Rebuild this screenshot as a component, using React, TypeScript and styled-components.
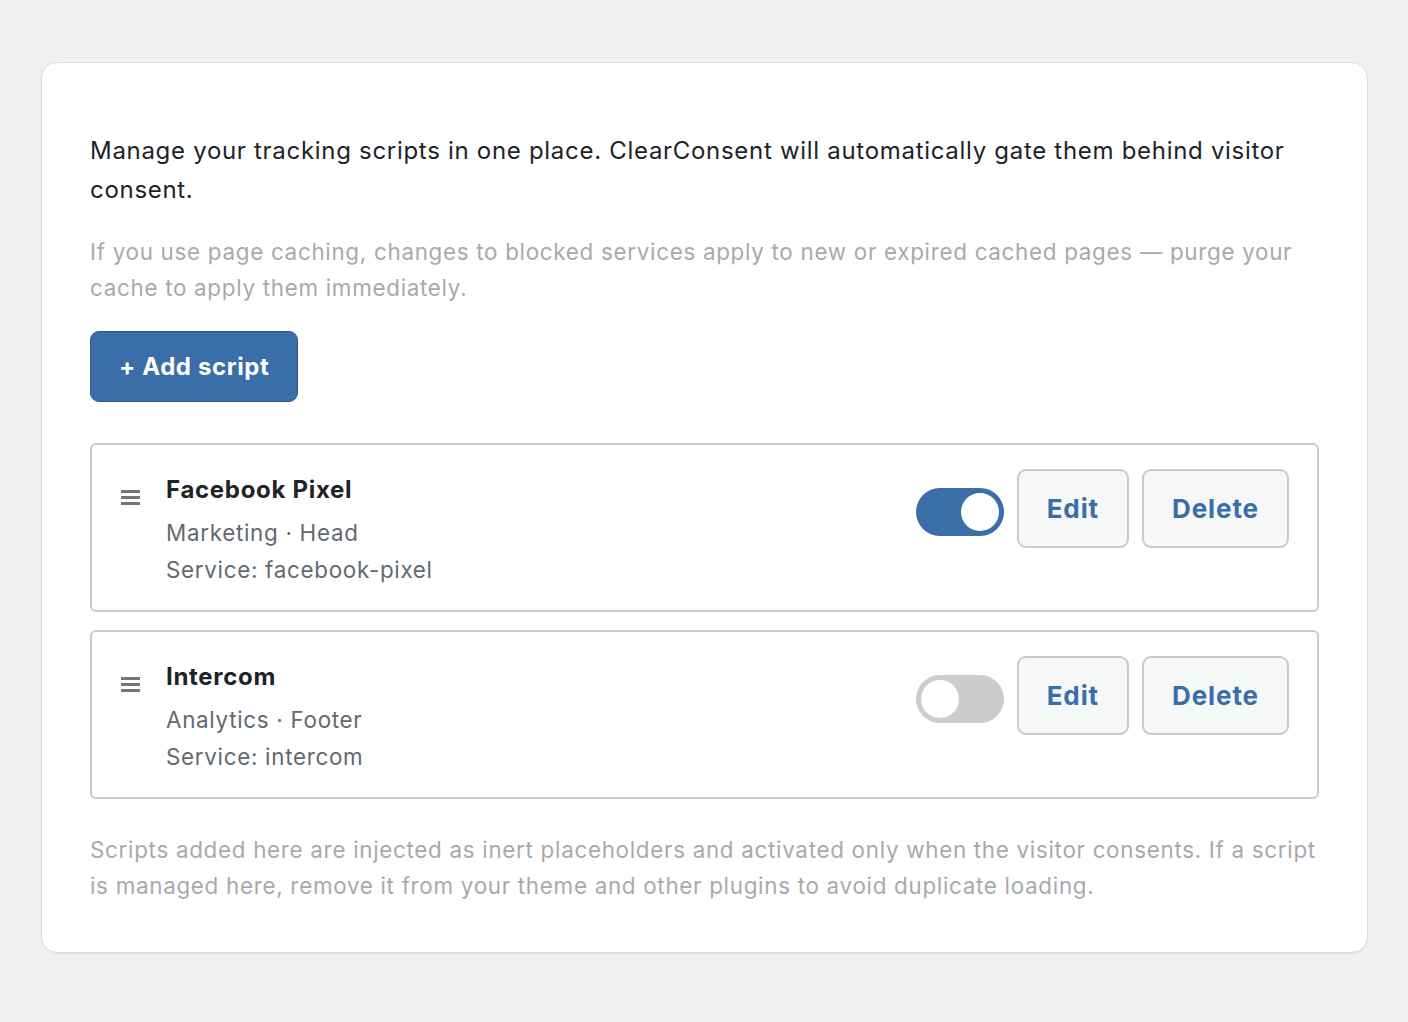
import React, { useState } from 'react'
import styled, { createGlobalStyle } from 'styled-components'

const GlobalStyle = createGlobalStyle`
  html, body {
    margin: 0;
    padding: 0;
    background: #f0f0f1;
  }
  body {
    font-family: Inter, "Noto Sans", "Liberation Sans", sans-serif;
    color: #1d2327;
    letter-spacing: 0.7px;
    -webkit-font-smoothing: antialiased;
  }
  * { box-sizing: border-box; }
`

interface Script {
  id: string
  name: string
  category: string
  position: string
  service: string
  enabled: boolean
}

const initialScripts: Script[] = [
  { id: 'fb', name: 'Facebook Pixel', category: 'Marketing', position: 'Head', service: 'facebook-pixel', enabled: true },
  { id: 'ic', name: 'Intercom', category: 'Analytics', position: 'Footer', service: 'intercom', enabled: false },
]

const App: React.FC = () => {
  const [scripts, setScripts] = useState(initialScripts)

  const toggle = (id: string) => {
    setScripts(list => list.map(s => (s.id === id ? { ...s, enabled: !s.enabled } : s)))
  }

  return (
    <>
      <GlobalStyle />
      <StyledPage>
        <StyledCard>
          <StyledIntro>
            Manage your tracking scripts in one place. ClearConsent will automatically gate them behind visitor consent.
          </StyledIntro>
          <StyledNotice>
            If you use page caching, changes to blocked services apply to new or expired cached pages — purge your cache to apply them immediately.
          </StyledNotice>
          <StyledPrimaryButton type="button">+ Add script</StyledPrimaryButton>

          <StyledList>
            {scripts.map(s => (
              <StyledItem key={s.id}>
                <StyledHandle aria-hidden>
                  <span />
                  <span />
                  <span />
                </StyledHandle>
                <StyledInfo>
                  <StyledName>{s.name}</StyledName>
                  <StyledMeta>{s.category} · {s.position}</StyledMeta>
                  <StyledMeta>Service: {s.service}</StyledMeta>
                </StyledInfo>
                <StyledActions>
                  <StyledSwitch
                    type="button"
                    role="switch"
                    aria-checked={s.enabled}
                    on={s.enabled}
                    onClick={() => toggle(s.id)}
                  >
                    <StyledKnob on={s.enabled} />
                  </StyledSwitch>
                  <StyledSecondaryButton type="button">Edit</StyledSecondaryButton>
                  <StyledSecondaryButton type="button">Delete</StyledSecondaryButton>
                </StyledActions>
              </StyledItem>
            ))}
          </StyledList>

          <StyledFootnote>
            Scripts added here are injected as inert placeholders and activated only when the visitor consents. If a script is managed here, remove it from your theme and other plugins to avoid duplicate loading.
          </StyledFootnote>
        </StyledCard>
      </StyledPage>
    </>
  )
}

const StyledPage = styled.div`
  padding: 62px 40px 70px 41px;
`

const StyledCard = styled.div`
  background: #fff;
  border: 1px solid #dcdcde;
  border-radius: 16px;
  box-shadow: 0 1px 2px rgba(0, 0, 0, 0.05);
  padding: 68px 48px 48px;
`

const StyledIntro = styled.p`
  margin: 0;
  font-size: 24px;
  line-height: 39px;
  color: #1d2327;
`

const StyledNotice = styled.p`
  margin: 25px 0 0;
  font-size: 22.4px;
  line-height: 36px;
  color: #a7aaad;
`

const StyledPrimaryButton = styled.button`
  margin-top: 25px;
  height: 71px;
  padding: 0 28px;
  border: 1.5px solid #2c5a8c;
  border-radius: 9px;
  background: #3a6ea8;
  color: #fff;
  font-family: inherit;
  font-size: 24px;
  font-weight: 700;
  letter-spacing: 0.6px;
  cursor: pointer;
`

const StyledList = styled.div`
  margin-top: 41px;
  display: flex;
  flex-direction: column;
  gap: 18px;
`

const StyledItem = styled.div`
  display: flex;
  align-items: flex-start;
  border: 2px solid #c9cacd;
  border-radius: 6px;
  padding: 24px 28px 22px 29px;
`

const StyledHandle = styled.div`
  display: flex;
  flex-direction: column;
  gap: 3.5px;
  width: 19px;
  margin-top: 21px;
  margin-right: 26px;

  span {
    display: block;
    height: 2.5px;
    background: #72767b;
  }
`

const StyledInfo = styled.div`
  flex: 1;
  display: flex;
  flex-direction: column;
  padding-top: 4px;
`

const StyledName = styled.div`
  font-size: 24px;
  font-weight: 700;
  line-height: 34px;
  margin-bottom: 7px;
`

const StyledMeta = styled.div`
  font-size: 22.4px;
  line-height: 37px;
  color: #646970;
`

const StyledActions = styled.div`
  display: flex;
  align-items: center;
  gap: 13px;
`

interface SwitchProps {
  on: boolean
}

const StyledSwitch = styled.button.withConfig({ shouldForwardProp: p => p !== 'on' })<SwitchProps>`
  position: relative;
  width: 88px;
  height: 48px;
  margin-top: 7px;
  padding: 0;
  border: none;
  border-radius: 24px;
  background: ${props => (props.on ? '#3a6ea8' : '#cccccc')};
  cursor: pointer;
`

const StyledKnob = styled.span.withConfig({ shouldForwardProp: p => p !== 'on' })<SwitchProps>`
  position: absolute;
  top: 5px;
  left: ${props => (props.on ? '45px' : '5px')};
  width: 38px;
  height: 38px;
  border-radius: 50%;
  background: #fff;
`

const StyledSecondaryButton = styled.button`
  height: 79px;
  padding: 0 28px;
  border: 2px solid #c9cacd;
  border-radius: 9px;
  background: #f6f7f7;
  color: #3a6ea8;
  font-family: inherit;
  font-size: 26px;
  font-weight: 700;
  letter-spacing: 0.9px;
  cursor: pointer;
`

const StyledFootnote = styled.p`
  margin: 33px 0 0;
  font-size: 22.4px;
  line-height: 36px;
  color: #a7aaad;
`

export default App
